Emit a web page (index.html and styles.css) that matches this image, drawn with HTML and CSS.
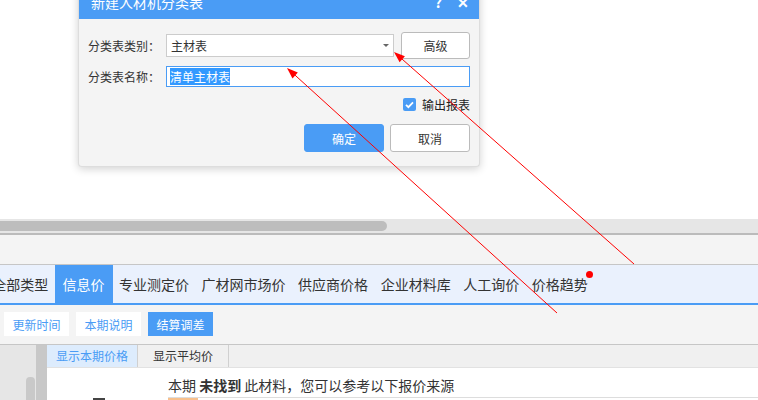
FILE: index.html
```html
<!DOCTYPE html>
<html lang="zh-CN">
<head>
  <meta charset="UTF-8">
  <title>新建人材机分类表</title>
  <link rel="stylesheet" href="styles.css">
</head>
<body>
  <!-- Page behind the dialog -->
  <div class="page">
    <div class="page__blank"></div>
    <div class="hscroll"><div class="hscroll__thumb"></div></div>
    <div class="page__band"></div>

    <nav class="tabs">
      <span class="tabs__item">全部类型</span>
      <span class="tabs__item tabs__item--active">信息价</span>
      <span class="tabs__item">专业测定价</span>
      <span class="tabs__item">广材网市场价</span>
      <span class="tabs__item">供应商价格</span>
      <span class="tabs__item">企业材料库</span>
      <span class="tabs__item">人工询价</span>
      <span class="tabs__item tabs__item--dot">价格趋势</span>
    </nav>

    <div class="toolbar">
      <button class="toolbar__btn">更新时间</button>
      <button class="toolbar__btn">本期说明</button>
      <button class="toolbar__btn toolbar__btn--primary">结算调差</button>
    </div>

    <div class="lower">
      <div class="lower__side"><div class="vscroll"></div></div>
      <div class="lower__split"></div>
      <div class="lower__main">
        <div class="subtabs">
          <span class="subtabs__item subtabs__item--active">显示本期价格</span>
          <span class="subtabs__item">显示平均价</span>
        </div>
        <div class="result">
          <div class="result__left"><span class="result__mark"></span></div>
          <div class="result__body">
            <p class="result__msg">本期 <b>未找到</b> 此材料，您可以参考以下报价来源</p>
            <div class="result__row"><span class="result__tag"></span></div>
          </div>
        </div>
      </div>
    </div>
  </div>

  <!-- Dialog -->
  <div class="dialog" role="dialog" aria-label="新建人材机分类表">
    <div class="dialog__head">
      <span class="dialog__title">新建人材机分类表</span>
      <span class="dialog__icon">?</span>
      <span class="dialog__icon">✕</span>
    </div>
    <div class="dialog__body">
      <div class="field">
        <label class="field__label">分类表类别：</label>
        <div class="select">
          <span>主材表</span>
          <span class="select__caret"></span>
        </div>
        <button class="btn btn--side">高级</button>
      </div>
      <div class="field field--name">
        <label class="field__label">分类表名称：</label>
        <div class="input"><span class="input__sel">清单主材表</span></div>
      </div>
      <div class="check">
        <span class="check__box">
          <svg width="13" height="13" viewBox="0 0 13 13"><path d="M3 6.8l2.4 2.4L10 4.4" fill="none" stroke="#fff" stroke-width="1.8"/></svg>
        </span>
        <span>输出报表</span>
      </div>
      <div class="dialog__foot">
        <button class="btn btn--primary">确定</button>
        <button class="btn">取消</button>
      </div>
    </div>
  </div>

  <!-- Annotation arrows -->
  <svg class="marks" width="758" height="400" viewBox="0 0 758 400">
    <line x1="557" y1="313" x2="291" y2="71.5" stroke="#f00" stroke-width="1"/>
    <polygon points="287,68 292.5,78.4 297.8,72.4" fill="#f00"/>
    <line x1="634" y1="264" x2="398" y2="55.5" stroke="#f00" stroke-width="1"/>
    <polygon points="394,52 399.6,62.3 404.9,56.3" fill="#f00"/>
  </svg>
</body>
</html>
```

FILE: styles.css
```css
:root {
  --blue: #4a9cf5;
  --text: #333;
  --line: #c6c6c6;
  --panel: #f4f4f4;
}
* { box-sizing: border-box; margin: 0; padding: 0; }
body {
  width: 758px;
  height: 400px;
  overflow: hidden;
  position: relative;
  background: #fff;
  color: var(--text);
  font-family: "Noto Sans CJK SC", "Microsoft YaHei", sans-serif;
  font-size: 12px;
}
button { font: inherit; cursor: pointer; }

/* page */
.page__blank { height: 219px; }
.hscroll {
  height: 16px;
  background: #e6e6e6;
  padding-top: 2px;
  border-bottom: 2px solid #bbb;
}
.hscroll__thumb {
  width: 387px;
  height: 10px;
  background: #bdbdbd;
  border-radius: 0 5px 5px 0;
}
.page__band {
  height: 30px;
  background: var(--panel);
  border-bottom: 1px solid var(--line);
}

.tabs {
  display: flex;
  height: 40px;
  background: #eaf1fd;
  border-bottom: 2px solid var(--blue);
  margin-left: -14px;
  font-size: 14px;
}
.tabs__item {
  position: relative;
  padding: 0 6.3px;
  line-height: 38px;
  white-space: nowrap;
  color: #333;
}
.tabs__item--active { background: var(--blue); color: #fff; padding: 0 8px; }
.tabs__item--dot::after {
  content: "";
  position: absolute;
  right: 1px;
  top: 6px;
  width: 7px;
  height: 7px;
  border-radius: 50%;
  background: #f00;
}

.toolbar {
  display: flex;
  gap: 7px;
  height: 40px;
  padding: 7px 0 0 4px;
  background: var(--panel);
  border-bottom: 1px solid var(--line);
}
.toolbar__btn {
  width: 65px;
  height: 24px;
  border: none;
  background: #fff;
  color: var(--blue);
  font-size: 12px;
}
.toolbar__btn--primary { background: var(--blue); color: #fff; }

.lower { display: flex; height: 60px; }
.lower__side { width: 36px; background: #e6e6e6; }
.vscroll {
  margin: 32px 0 0 26px;
  width: 9px;
  height: 40px;
  background: #c9c9c9;
  border-radius: 4px 4px 0 0;
}
.lower__split { width: 11px; background: #c8c8c8; }
.lower__main { flex: 1; display: flex; flex-direction: column; }
.subtabs {
  display: flex;
  height: 23px;
  background: #f0f0f0;
  border-bottom: 1px solid #e2e2e2;
}
.subtabs__item {
  width: 91px;
  text-align: center;
  line-height: 22px;
  border-right: 1px solid #d0d0d0;
}
.subtabs__item--active { background: #ddecfd; color: var(--blue); }

.result { display: flex; flex: 1; background: #fff; }
.result__left { width: 121px; position: relative; }
.result__mark {
  position: absolute;
  left: 46px;
  top: 30px;
  width: 12px;
  height: 3px;
  background: #444;
}
.result__body { flex: 1; }
.result__msg {
  font-size: 14px;
  line-height: 20px;
  margin-top: 7px;
  color: #333;
}
.result__row {
  margin-top: 2px;
  border-top: 1px solid #ddd;
  height: 10px;
}
.result__tag { display: block; width: 30px; height: 10px; background: #f8c08c; }

/* dialog */
.dialog {
  position: absolute;
  left: 78px;
  top: -16px;
  width: 402px;
  background: var(--panel);
  border: 1px solid #ddd;
  border-top: none;
  border-radius: 0 0 4px 4px;
  box-shadow: 0 2px 8px rgba(0, 0, 0, 0.18);
}
.dialog__head {
  display: flex;
  align-items: center;
  height: 35px;
  padding: 0 10px 0 12px;
  background: var(--blue);
  color: #fff;
}
.dialog__title { flex: 1; font-size: 14px; }
.dialog__icon { font-size: 14px; font-weight: bold; margin-left: 15px; }
.dialog__body { padding: 13px 9px 14px 9px; }

.field { display: flex; align-items: center; }
.field__label { width: 78px; flex-shrink: 0; color: #333; }
.select {
  display: flex;
  align-items: center;
  justify-content: space-between;
  width: 228px;
  height: 23px;
  padding: 0 4px;
  background: #fff;
  border: 1px solid #ccc;
}
.select__caret {
  border: 3px solid transparent;
  border-top: 3px solid #666;
  margin-top: 3px;
}
.btn {
  width: 80px;
  height: 28px;
  background: #fff;
  border: 1px solid #bbb;
  border-radius: 3px;
  color: #333;
}
.btn--side { width: 69px; height: 27px; margin-left: 7px; }
.btn--primary { background: var(--blue); border-color: var(--blue); color: #fff; }

.field--name { margin-top: 7px; }
.input {
  display: flex;
  align-items: center;
  width: 304px;
  height: 21px;
  padding: 0 3px;
  background: #fff;
  border: 1px solid var(--blue);
}
.input__sel { background: #3399ff; color: #fff; line-height: 17px; }

.check {
  display: flex;
  align-items: center;
  justify-content: flex-end;
  gap: 6px;
  margin-top: 9px;
  color: #222;
}
.check__box {
  display: flex;
  width: 13px;
  height: 13px;
  background: var(--blue);
  border-radius: 2px;
}

.dialog__foot {
  display: flex;
  justify-content: flex-end;
  gap: 6px;
  margin-top: 11px;
}

.marks { position: absolute; left: 0; top: 0; pointer-events: none; }
```
